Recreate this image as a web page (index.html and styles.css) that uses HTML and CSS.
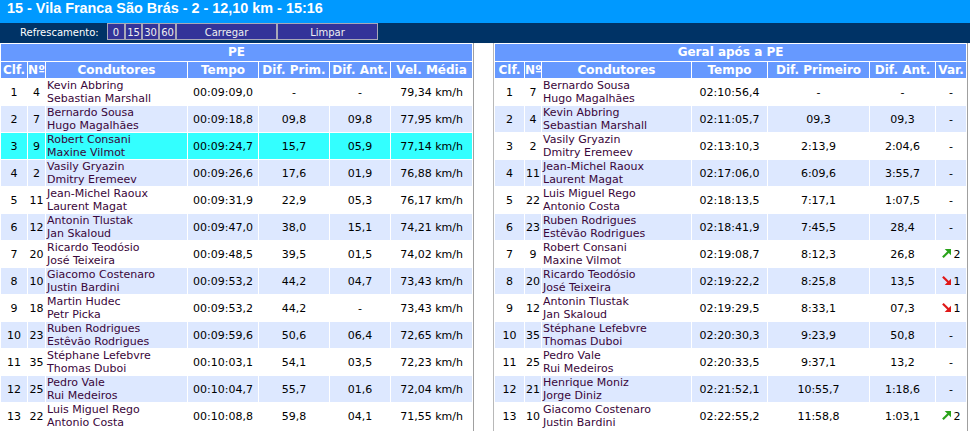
FILE: index.html
```html
<!DOCTYPE html>
<html lang="pt">
<head>
<meta charset="utf-8">
<title>15 - Vila Franca São Brás</title>
<link rel="stylesheet" href="styles.css">
</head>
<body>
<div class="topbar">15 - Vila Franca São Brás - 2 - 12,10 km - 15:16</div>
<div class="toolbar">
  <span class="label">Refrescamento:</span>
  <span class="btn first">0</span><span class="btn n">15</span><span class="btn n">30</span><span class="btn n">60</span><span class="btn w">Carregar</span><span class="btn w">Limpar</span>
</div>
<div class="panels">
  <div class="panel left">
    <table class="grid">
      <colgroup><col class="c-clf"><col class="c-no"><col class="c-name"><col class="c-time"><col class="c-d1"><col class="c-d2"><col class="c-vel"></colgroup>
      <tr class="ttl"><th colspan="7">PE</th></tr>
      <tr class="hdr"><th>Clf.</th><th>Nº</th><th>Condutores</th><th>Tempo</th><th>Dif. Prim.</th><th>Dif. Ant.</th><th>Vel. Média</th></tr>
      <tr><td>1</td><td>4</td><td class="nm">Kevin Abbring<br>Sebastian Marshall</td><td>00:09:09,0</td><td>-</td><td>-</td><td>79,34 km/h</td></tr>
      <tr class="alt"><td>2</td><td>7</td><td class="nm">Bernardo Sousa<br>Hugo Magalhães</td><td>00:09:18,8</td><td>09,8</td><td>09,8</td><td>77,95 km/h</td></tr>
      <tr class="hl"><td>3</td><td>9</td><td class="nm">Robert Consani<br>Maxine Vilmot</td><td>00:09:24,7</td><td>15,7</td><td>05,9</td><td>77,14 km/h</td></tr>
      <tr class="alt"><td>4</td><td>2</td><td class="nm">Vasily Gryazin<br>Dmitry Eremeev</td><td>00:09:26,6</td><td>17,6</td><td>01,9</td><td>76,88 km/h</td></tr>
      <tr><td>5</td><td>11</td><td class="nm">Jean-Michel Raoux<br>Laurent Magat</td><td>00:09:31,9</td><td>22,9</td><td>05,3</td><td>76,17 km/h</td></tr>
      <tr class="alt"><td>6</td><td>12</td><td class="nm">Antonin Tlustak<br>Jan Skaloud</td><td>00:09:47,0</td><td>38,0</td><td>15,1</td><td>74,21 km/h</td></tr>
      <tr><td>7</td><td>20</td><td class="nm">Ricardo Teodósio<br>José Teixeira</td><td>00:09:48,5</td><td>39,5</td><td>01,5</td><td>74,02 km/h</td></tr>
      <tr class="alt"><td>8</td><td>10</td><td class="nm">Giacomo Costenaro<br>Justin Bardini</td><td>00:09:53,2</td><td>44,2</td><td>04,7</td><td>73,43 km/h</td></tr>
      <tr><td>9</td><td>18</td><td class="nm">Martin Hudec<br>Petr Picka</td><td>00:09:53,2</td><td>44,2</td><td>-</td><td>73,43 km/h</td></tr>
      <tr class="alt"><td>10</td><td>23</td><td class="nm">Ruben Rodrigues<br>Estêvão Rodrigues</td><td>00:09:59,6</td><td>50,6</td><td>06,4</td><td>72,65 km/h</td></tr>
      <tr><td>11</td><td>35</td><td class="nm">Stéphane Lefebvre<br>Thomas Duboi</td><td>00:10:03,1</td><td>54,1</td><td>03,5</td><td>72,23 km/h</td></tr>
      <tr class="alt"><td>12</td><td>25</td><td class="nm">Pedro Vale<br>Rui Medeiros</td><td>00:10:04,7</td><td>55,7</td><td>01,6</td><td>72,04 km/h</td></tr>
      <tr><td>13</td><td>22</td><td class="nm">Luis Miguel Rego<br>Antonio Costa</td><td>00:10:08,8</td><td>59,8</td><td>04,1</td><td>71,55 km/h</td></tr>
    </table>
  </div>
  <div class="panel right">
    <table class="grid">
      <colgroup><col class="r-clf"><col class="r-no"><col class="r-name"><col class="r-time"><col class="r-d1"><col class="r-d2"><col class="r-var"></colgroup>
      <tr class="ttl"><th colspan="7">Geral após a PE</th></tr>
      <tr class="hdr"><th>Clf.</th><th>Nº</th><th>Condutores</th><th>Tempo</th><th>Dif. Primeiro</th><th>Dif. Ant.</th><th>Var.</th></tr>
      <tr><td>1</td><td>7</td><td class="nm">Bernardo Sousa<br>Hugo Magalhães</td><td>02:10:56,4</td><td>-</td><td>-</td><td>-</td></tr>
      <tr class="alt"><td>2</td><td>4</td><td class="nm">Kevin Abbring<br>Sebastian Marshall</td><td>02:11:05,7</td><td>09,3</td><td>09,3</td><td>-</td></tr>
      <tr><td>3</td><td>2</td><td class="nm">Vasily Gryazin<br>Dmitry Eremeev</td><td>02:13:10,3</td><td>2:13,9</td><td>2:04,6</td><td>-</td></tr>
      <tr class="alt"><td>4</td><td>11</td><td class="nm">Jean-Michel Raoux<br>Laurent Magat</td><td>02:17:06,0</td><td>6:09,6</td><td>3:55,7</td><td>-</td></tr>
      <tr><td>5</td><td>22</td><td class="nm">Luis Miguel Rego<br>Antonio Costa</td><td>02:18:13,5</td><td>7:17,1</td><td>1:07,5</td><td>-</td></tr>
      <tr class="alt"><td>6</td><td>23</td><td class="nm">Ruben Rodrigues<br>Estêvão Rodrigues</td><td>02:18:41,9</td><td>7:45,5</td><td>28,4</td><td>-</td></tr>
      <tr><td>7</td><td>9</td><td class="nm">Robert Consani<br>Maxine Vilmot</td><td>02:19:08,7</td><td>8:12,3</td><td>26,8</td><td><svg class="arr" viewBox="0 0 10 10" width="10" height="10"><polygon points="3,0 10,0 10,7" fill="#2aa31a"/><line x1="1" y1="9.2" x2="7.2" y2="3" stroke="#2aa31a" stroke-width="2.4"/></svg>2</td></tr>
      <tr class="alt"><td>8</td><td>20</td><td class="nm">Ricardo Teodósio<br>José Teixeira</td><td>02:19:22,2</td><td>8:25,8</td><td>13,5</td><td><svg class="arr" viewBox="0 0 10 10" width="10" height="10"><polygon points="3,10 10,10 10,3" fill="#e01818"/><line x1="1" y1="0.8" x2="7.2" y2="7" stroke="#e01818" stroke-width="2.4"/></svg>1</td></tr>
      <tr><td>9</td><td>12</td><td class="nm">Antonin Tlustak<br>Jan Skaloud</td><td>02:19:29,5</td><td>8:33,1</td><td>07,3</td><td><svg class="arr" viewBox="0 0 10 10" width="10" height="10"><polygon points="3,10 10,10 10,3" fill="#e01818"/><line x1="1" y1="0.8" x2="7.2" y2="7" stroke="#e01818" stroke-width="2.4"/></svg>1</td></tr>
      <tr class="alt"><td>10</td><td>35</td><td class="nm">Stéphane Lefebvre<br>Thomas Duboi</td><td>02:20:30,3</td><td>9:23,9</td><td>50,8</td><td>-</td></tr>
      <tr><td>11</td><td>25</td><td class="nm">Pedro Vale<br>Rui Medeiros</td><td>02:20:33,5</td><td>9:37,1</td><td>13,2</td><td>-</td></tr>
      <tr class="alt"><td>12</td><td>21</td><td class="nm">Henrique Moniz<br>Jorge Diniz</td><td>02:21:52,1</td><td>10:55,7</td><td>1:18,6</td><td>-</td></tr>
      <tr><td>13</td><td>10</td><td class="nm">Giacomo Costenaro<br>Justin Bardini</td><td>02:22:55,2</td><td>11:58,8</td><td>1:03,1</td><td><svg class="arr" viewBox="0 0 10 10" width="10" height="10"><polygon points="3,0 10,0 10,7" fill="#2aa31a"/><line x1="1" y1="9.2" x2="7.2" y2="3" stroke="#2aa31a" stroke-width="2.4"/></svg>2</td></tr>
    </table>
  </div>
</div>
</body>
</html>
```
FILE: styles.css
```css
html, body {
  margin: 0;
  padding: 0;
  background: #ffffff;
}
body {
  width: 970px;
  height: 431px;
  overflow: hidden;
  font-family: "DejaVu Sans", Verdana, sans-serif;
}
.topbar {
  height: 23px;
  background: #0099ff;
  color: #ffffff;
  font: bold 14.4px/17px "Liberation Sans", Arial, sans-serif;
  padding-left: 7px;
  white-space: nowrap;
}
.toolbar {
  height: 20px;
  background: #003366;
  display: flex;
  align-items: flex-start;
}
.label {
  box-sizing: border-box;
  width: 107px;
  padding-left: 20px;
  padding-top: 2px;
  color: #ffffff;
  font-size: 10px;
  line-height: 16px;
}
.btn {
  box-sizing: border-box;
  height: 17px;
  border: 1px solid #a8a8b8;
  background: #333399;
  color: #f0f0f0;
  font-size: 10px;
  line-height: 15px;
  padding-top: 1px;
  text-align: center;
}
.btn.first { width: 18px; }
.btn.n { width: 17px; }
.btn.w { width: 101px; }

.panels {
  display: flex;
  align-items: stretch;
  height: 388px;
}
.panel {
  width: 473px;
  height: 100%;
}
.panel.left {
  border-right: 1px solid #a0a0a0;
}
.panel.right {
  margin-left: 19px;
  border-left: 1px solid #b8b8b8;
  border-right: 1px solid #a0a0a0;
}
.grid {
  width: 473px;
  table-layout: fixed;
  border-collapse: separate;
  border-spacing: 1px;
  font-size: 11px;
  color: #000000;
}
.c-clf { width: 26px; }
.c-no { width: 17px; }
.c-name { width: 141px; }
.c-time { width: 70px; }
.c-d1 { width: 70px; }
.c-d2 { width: 60px; }
.c-vel { width: 81px; }
.r-clf { width: 29px; }
.r-no { width: 16px; }
.r-name { width: 149px; }
.r-time { width: 75px; }
.r-d1 { width: 101px; }
.r-d2 { width: 65px; }
.r-var { width: 30px; }

.grid th {
  background: #6699ff;
  color: #ffffff;
  font-weight: bold;
  font-size: 12px;
  padding: 0;
  white-space: nowrap;
  overflow: visible;
  text-align: center;
}
.ttl th {
  height: 17px;
  line-height: 17px;
}
.hdr th {
  height: 16px;
  line-height: 16px;
}
.grid td {
  height: 26px;
  padding: 0;
  line-height: 13px;
  text-align: center;
  vertical-align: middle;
  white-space: nowrap;
}
.grid td.nm {
  text-align: left;
  padding-left: 1px;
  color: #3a063a;
}
.grid tr.alt td {
  background: #dde8ff;
}
.grid tr.hl td {
  background: #33ffff;
}
.arr {
  width: 9px;
  height: 9px;
  vertical-align: 0;
  margin-right: 3px;
}
```
